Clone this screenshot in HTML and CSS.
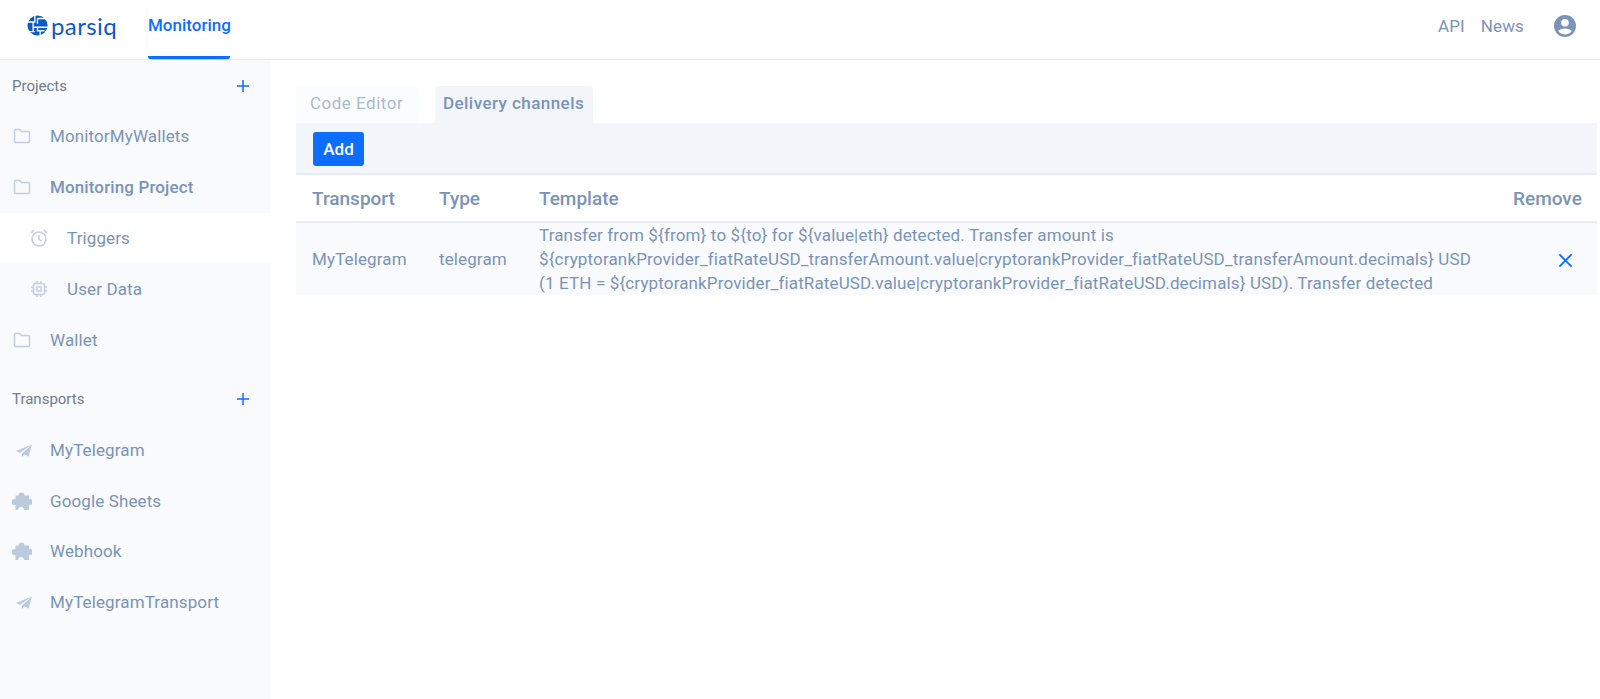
FILE: index.html
```html
<!DOCTYPE html>
<html lang="en">
<head>
    <meta charset="UTF-8">
    <meta name="viewport" content="width=device-width, initial-scale=1.0">
    <title>Monitoring</title>
    <link rel="stylesheet" href="styles.css">
</head>
<body>
    <header class="topbar">
        <a class="logo">
            <svg class="logo-mark" viewBox="0 0 24 24">
                <circle cx="12" cy="12" r="11.500" fill="#0b5bc4"/>
                <path d="M1 8h8V0M7 8v11M12 4h12M12 4v6M7 14h17M12 14v4h8M2 19h7M15 18v6" fill="none" stroke="#fff" stroke-width="1.500"/>
            </svg>
            <span class="logo-text">parsiq</span>
        </a>
        <a class="nav-main">Monitoring</a>
        <div class="topbar-right">
            <a class="nav-link">API</a>
            <a class="nav-link">News</a>
            <svg class="user-icon" viewBox="0 0 24 24">
                <path fill="#7b93b8" d="M12 1a11 11 0 1 0 0 22 11 11 0 0 0 0-22zm0 4a3.800 3.800 0 1 1 0 7.600 3.800 3.800 0 0 1 0-7.600zm0 15.600c-2.800 0-5.300-1.400-6.800-3.600 1-1.500 4.300-2.400 6.800-2.400s5.800 .9 6.800 2.400c-1.500 2.200-4 3.600-6.800 3.600z"/>
            </svg>
        </div>
    </header>

    <div class="layout">
        <aside class="sidebar">
            <div class="side-head">
                <span>Projects</span>
                <svg class="plus" viewBox="0 0 14 14"><path d="M7 1v12M1 7h12"/></svg>
            </div>
            <a class="side-item">
                <svg class="icon" viewBox="0 0 20 20"><path class="line" d="M2.500 4.500c0-.6.4-1 1-1h4l2 2h7c.6 0 1 .4 1 1v9c0 .6-.4 1-1 1h-13c-.6 0-1-.4-1-1z"/></svg>
                MonitorMyWallets
            </a>
            <a class="side-item bold">
                <svg class="icon" viewBox="0 0 20 20"><path class="line" d="M2.500 4.500c0-.6.4-1 1-1h4l2 2h7c.6 0 1 .4 1 1v9c0 .6-.4 1-1 1h-13c-.6 0-1-.4-1-1z"/></svg>
                Monitoring Project
            </a>
            <a class="side-item sub active">
                <svg class="icon" viewBox="0 0 20 20">
                    <circle class="line" cx="10" cy="11" r="7"/>
                    <path class="line" d="M10 7v4.500l2.500 1.500M2 5l3-3M18 5l-3-3"/>
                </svg>
                Triggers
            </a>
            <a class="side-item sub">
                <svg class="icon" viewBox="0 0 20 20">
                    <rect class="line" x="4.500" y="4.500" width="11" height="11" rx="1.500"/>
                    <rect class="line" x="8" y="8" width="4" height="4"/>
                    <path class="line" d="M8 2v2.500M12 2v2.500M8 15.500V18M12 15.500V18M2 8h2.500M2 12h2.500M15.500 8H18M15.500 12H18"/>
                </svg>
                User Data
            </a>
            <a class="side-item">
                <svg class="icon" viewBox="0 0 20 20"><path class="line" d="M2.500 4.500c0-.6.4-1 1-1h4l2 2h7c.6 0 1 .4 1 1v9c0 .6-.4 1-1 1h-13c-.6 0-1-.4-1-1z"/></svg>
                Wallet
            </a>

            <div class="side-head second">
                <span>Transports</span>
                <svg class="plus" viewBox="0 0 14 14"><path d="M7 1v12M1 7h12"/></svg>
            </div>
            <a class="side-item">
                <svg class="icon" viewBox="0 0 20 20"><path class="solid" d="M20 4.500L4 11l4 1.800zM20 4.500L10 13.500v3.500l2.500-2.500 4 2z"/></svg>
                MyTelegram
            </a>
            <a class="side-item">
                <svg class="icon" viewBox="0 0 20 20"><path class="solid" d="M6.500 4.500a3 3 0 1 1 6 0H17v3.800a3 3 0 1 1 0 5.400V19h-5a3 3 0 1 0-6 0H3.500v-5.300a3 3 0 1 1 0-5.400V4.500z"/></svg>
                Google Sheets
            </a>
            <a class="side-item">
                <svg class="icon" viewBox="0 0 20 20"><path class="solid" d="M6.500 4.500a3 3 0 1 1 6 0H17v3.800a3 3 0 1 1 0 5.400V19h-5a3 3 0 1 0-6 0H3.500v-5.300a3 3 0 1 1 0-5.400V4.500z"/></svg>
                Webhook
            </a>
            <a class="side-item">
                <svg class="icon" viewBox="0 0 20 20"><path class="solid" d="M20 4.500L4 11l4 1.800zM20 4.500L10 13.500v3.500l2.500-2.500 4 2z"/></svg>
                MyTelegramTransport
            </a>
        </aside>

        <main class="content">
            <div class="tabs">
                <a class="tab">Code Editor</a>
                <a class="tab tab-active">Delivery channels</a>
            </div>
            <div class="toolbar">
                <button class="btn-add">Add</button>
            </div>
            <table class="channels">
                <thead>
                    <tr>
                        <th class="col-transport">Transport</th>
                        <th class="col-type">Type</th>
                        <th>Template</th>
                        <th class="col-remove">Remove</th>
                    </tr>
                </thead>
                <tbody>
                    <tr>
                        <td>MyTelegram</td>
                        <td>telegram</td>
                        <td class="template">
                            <span class="tpl-line">Transfer from ${from} to ${to} for ${value|eth} detected. Transfer amount is</span>
                            <span class="tpl-line">${cryptorankProvider_fiatRateUSD_transferAmount.value|cryptorankProvider_fiatRateUSD_transferAmount.decimals} USD</span>
                            <span class="tpl-line">(1 ETH = ${cryptorankProvider_fiatRateUSD.value|cryptorankProvider_fiatRateUSD.decimals} USD). Transfer detected</span>
                        </td>
                        <td class="cell-remove">
                            <svg class="close" viewBox="0 0 16 16"><path d="M1.500 1.500l13 13M14.500 1.500l-13 13"/></svg>
                        </td>
                    </tr>
                </tbody>
            </table>
        </main>
    </div>
</body>
</html>
```

FILE: styles.css
```css
* {
    box-sizing: border-box;
}

html, body {
    height: 100%;
}

body {
    margin: 0;
    display: flex;
    flex-direction: column;
    overflow: hidden;
    font-family: Roboto, sans-serif;
    font-size: 17px;
    letter-spacing: .12px;
    color: #7b93b8;
    background-color: #fff;
}

.topbar {
    display: flex;
    align-items: center;
    flex: none;
    height: 60px;
    padding-left: 27px;
    padding-bottom: 8px;
    border-bottom: 1px solid #e6edf5;
}

.logo {
    display: flex;
    align-items: center;
    width: 121px;
}

.logo-mark {
    width: 21px;
    height: 21px;
    margin-right: 3px;
}

.logo-text {
    font-family: Lato, sans-serif;
    font-size: 24px;
    letter-spacing: .4px;
    color: #0b5bc4;
    line-height: 1;
}

.nav-main {
    align-self: stretch;
    display: flex;
    align-items: center;
    width: 82px;
    margin-bottom: -8px;
    padding-bottom: 7px;
    font-weight: 500;
    letter-spacing: 0;
    white-space: nowrap;
    color: #0d6efd;
    border-bottom: 3px solid #0d6efd;
    border-radius: 0 0 2px 2px;
    box-shadow: 0 4px 4px -3px rgba(13, 110, 253, .45);
}

.topbar-right {
    display: flex;
    align-items: center;
    margin-left: auto;
    padding-right: 23px;
}

.nav-link {
    margin-right: 16px;
}

.nav-link + .user-icon {
    margin-left: 13px;
}

.user-icon {
    width: 24px;
    height: 24px;
}

.layout {
    display: flex;
    flex: 1;
    min-height: 0;
}

.sidebar {
    flex: none;
    width: 271px;
    background-color: #f8fafc;
}

.side-head {
    display: flex;
    align-items: center;
    justify-content: space-between;
    height: 51px;
    padding: 0 21px 0 12px;
    font-size: 15px;
    letter-spacing: 0;
    color: #6f7c8f;
}

.side-head.second {
    margin-top: 8.4px;
}

.plus {
    width: 14px;
    height: 14px;
    fill: none;
    stroke: #0d6efd;
    stroke-width: 1.5;
}

.side-item {
    display: flex;
    align-items: center;
    height: 50.8px;
    padding-left: 12px;
}

.side-item.bold {
    font-weight: 500;
}

.side-item.sub {
    padding-left: 29px;
}

.side-item.active {
    background-color: #fff;
}

.icon {
    flex: none;
    width: 20px;
    height: 20px;
    margin-right: 18px;
}

.line {
    fill: none;
    stroke: #c2cfe0;
    stroke-width: 1.5;
}

.solid {
    fill: #bccadd;
}

.content {
    flex: 1;
    min-width: 0;
    padding: 26px 3px 0 25px;
}

.tabs {
    display: flex;
    gap: 17px;
}

.tab {
    width: 122px;
    height: 37px;
    padding-left: 14px;
    line-height: 35px;
    letter-spacing: .5px;
    color: #a9b9d0;
    background-color: #fbfcfe;
    border-radius: 4px 4px 0 0;
}

.tab-active {
    width: 158px;
    padding-left: 8px;
    letter-spacing: .44px;
    font-weight: 500;
    color: #7b93b8;
    background-color: #f2f5fa;
}

.toolbar {
    height: 52px;
    padding: 9px 17px;
    background-color: #f2f5fa;
    border-bottom: 2px solid #e6ebf4;
}

.btn-add {
    height: 34px;
    width: 51px;
    padding: 0;
    font-family: inherit;
    font-size: 17px;
    font-weight: 500;
    color: #fff;
    background-color: #0d6efd;
    border: none;
    border-radius: 3px;
}

.channels {
    width: 100%;
    table-layout: fixed;
    border-collapse: collapse;
}

.channels th {
    height: 47px;
    padding: 0 16px;
    font-size: 19px;
    font-weight: 500;
    letter-spacing: 0;
    text-align: left;
    border-bottom: 2px solid #e6ebf4;
}

.channels td {
    height: 72px;
    padding: 0 16px;
    line-height: 24px;
    background-color: #f8fafc;
}

.tpl-line {
    display: block;
    white-space: nowrap;
    letter-spacing: .14px;
}

.col-transport {
    width: 127px;
}

.col-type {
    width: 100px;
}

.channels .col-remove {
    width: 100px;
    padding-right: 18px;
    text-align: right;
}

.cell-remove {
    text-align: right;
}

.close {
    width: 15px;
    height: 15px;
    margin-right: 8px;
    fill: none;
    stroke: #0d6efd;
    stroke-width: 2;
    vertical-align: middle;
}
```
